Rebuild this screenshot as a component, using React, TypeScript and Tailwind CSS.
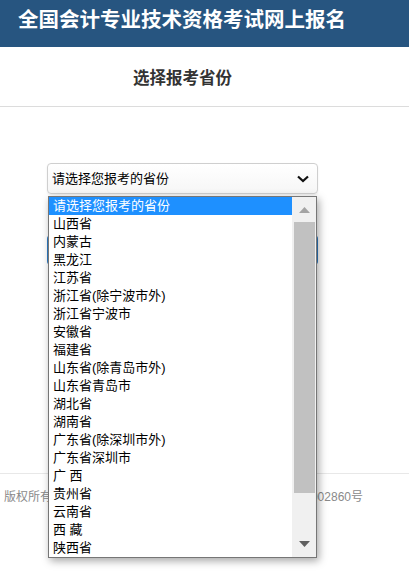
import React from "react";

const provinces = [
  "请选择您报考的省份",
  "山西省",
  "内蒙古",
  "黑龙江",
  "江苏省",
  "浙江省(除宁波市外)",
  "浙江省宁波市",
  "安徽省",
  "福建省",
  "山东省(除青岛市外)",
  "山东省青岛市",
  "湖北省",
  "湖南省",
  "广东省(除深圳市外)",
  "广东省深圳市",
  "广 西",
  "贵州省",
  "云南省",
  "西 藏",
  "陕西省",
];

function ProvinceList() {
  return (
    <div className="absolute left-[1px] top-[33px] z-10 flex w-[269px] border border-[#767676] bg-white shadow-[2px_3px_8px_rgba(0,0,0,0.35)]">
      <ul className="flex-1">
        {provinces.map((p, i) => (
          <li
            key={p}
            className={
              "h-[18px] pl-[4px] text-[13px] leading-[18px] whitespace-pre " +
              (i === 0 ? "bg-[#1e90ff] text-white" : "text-black")
            }
          >
            {p}
          </li>
        ))}
      </ul>
      {/* scrollbar */}
      <div className="flex w-[24px] flex-col bg-[#f0f0f0] pl-[2px] pr-[1px]">
        <div className="flex h-[25px] items-center justify-center">
          <svg width="11" height="6" viewBox="0 0 11 6">
            <path d="M0 6 L5.5 0 L11 6 Z" fill="#a3a3a3" />
          </svg>
        </div>
        <div className="h-[271px] bg-[#c1c1c1]" />
        <div className="flex flex-1 items-end justify-center pb-[10px]">
          <svg width="11" height="6" viewBox="0 0 11 6">
            <path d="M0 0 L11 0 L5.5 6 Z" fill="#606060" />
          </svg>
        </div>
      </div>
    </div>
  );
}

export default function App() {
  return (
    <div className="min-h-[581px] bg-white font-['Liberation_Sans','Noto_Sans_CJK_SC',sans-serif]">
      <header className="h-[47px] bg-[#275580] pl-[18px] pt-[6px]">
        <h1 className="text-[20.5px] font-bold leading-[28px] text-white">
          全国会计专业技术资格考试网上报名
        </h1>
      </header>

      <div className="flex h-[60px] items-center justify-center border-b border-[#dcdcdc] pr-[44px] pt-[4px]">
        <h2 className="text-[16.5px] font-bold text-[#333]">选择报考省份</h2>
      </div>

      <div className="px-[47px] pt-[56px]">
        <div className="relative w-[271px]">
          <div className="flex h-[31px] items-center justify-between rounded-[4px] border border-[#cfcfcf] bg-gradient-to-b from-white to-[#f6f6f6] pl-[4px] pr-[8px] shadow-[0_1px_2px_rgba(0,0,0,0.08)]">
            <span className="text-[13px] text-black">请选择您报考的省份</span>
            <svg width="12" height="8" viewBox="0 0 12 8">
              <path d="M1 1.5 L6 6 L11 1.5" fill="none" stroke="#111" strokeWidth="2.2" />
            </svg>
          </div>
          <ProvinceList />
        </div>

        <button className="mt-[41px] h-[30px] w-[271px] rounded-[4px] bg-[#2f7cc4] text-[14px] text-white">
          下一步
        </button>
      </div>

      <footer className="mt-[208px] border-t border-[#e8e8e8] pl-[4px] pt-[13px]">
        <div className="flex w-[359px] justify-between text-[12px] leading-[20px] text-[#8a8a8a]">
          <span>版权所有：财政部会计财务评价中心</span>
          <span>京ICP备05002860号</span>
        </div>
      </footer>
    </div>
  );
}
